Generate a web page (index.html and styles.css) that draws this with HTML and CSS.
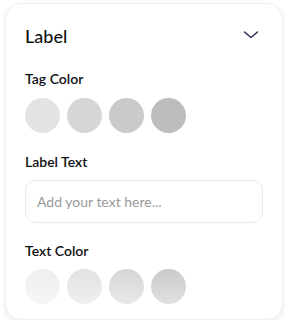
FILE: index.html
```html
<!DOCTYPE html>
<html>
<head>
<meta charset="utf-8">
<link rel="stylesheet" href="styles.css">
</head>
<body>
<div class="card">
  <div class="header">
    <h2 class="title">Label</h2>
    <svg class="chev" width="16" height="10" viewBox="0 0 16 10"><path d="M1.5 2 L8 7.5 L14.5 2" fill="none" stroke="#2b2d55" stroke-width="1.5" stroke-linecap="round" stroke-linejoin="round"/></svg>
  </div>
  <div class="section tag">
    <div class="label">Tag Color</div>
    <div class="swatches">
      <span class="dot t1"></span><span class="dot t2"></span><span class="dot t3"></span><span class="dot t4"></span>
    </div>
  </div>
  <div class="section text">
    <div class="label">Label Text</div>
    <div class="input">Add your text here...</div>
  </div>
  <div class="section textcolor">
    <div class="label">Text Color</div>
    <div class="swatches">
      <span class="dot c1"></span><span class="dot c2"></span><span class="dot c3"></span><span class="dot c4"></span>
    </div>
  </div>
</div>
</body>
</html>
```

FILE: styles.css
```css
html, body { margin: 0; padding: 0; background: #fff; }
body { padding: 3px 5px 0 5px; font-family: Lato, "Noto Sans", sans-serif; }
.card {
  box-sizing: border-box;
  width: 278px;
  height: 317px;
  border: 1px solid #efefef;
  border-radius: 16px;
  box-shadow: 0 3px 6px rgba(0,0,0,0.07);
  padding: 21px 19px 0 19px;
  background: #fff;
}
.header { display: flex; align-items: center; justify-content: space-between; height: 22px; }
.title { margin: 0; font-size: 18px; font-weight: 500; color: #111; line-height: 22px; }
.chev { margin-right: 4px; margin-top: -2px; }
.section { display: flex; flex-direction: column; }
.label { font-size: 14px; font-weight: 600; color: #111; line-height: 17px; }
.tag { margin-top: 23px; }
.tag .swatches { margin-top: 11px; }
.text { margin-top: 20px; }
.textcolor { margin-top: 19px; }
.textcolor .swatches { margin-top: 10px; }
.swatches { display: flex; gap: 7px; }
.dot { width: 35px; height: 35px; border-radius: 50%; display: block; }
.t1 { background: #e3e3e3; }
.t2 { background: #d6d6d6; }
.t3 { background: #cacaca; }
.t4 { background: #bdbdbd; }
.c1 { background: linear-gradient(to bottom, #eeeeee, #f6f6f6); }
.c2 { background: linear-gradient(to bottom, #e2e2e2, #efefef); }
.c3 { background: linear-gradient(to bottom, #d6d6d6, #e8e8e8); }
.c4 { background: linear-gradient(to bottom, #cbcbcb, #e0e0e0); }
.input {
  margin-top: 10px;
  box-sizing: border-box;
  height: 43px;
  border: 1px solid #ebebeb;
  border-radius: 10px;
  padding: 0 11px;
  display: flex;
  align-items: center;
  font-size: 14px;
  color: #9a9a9a;
}
```
